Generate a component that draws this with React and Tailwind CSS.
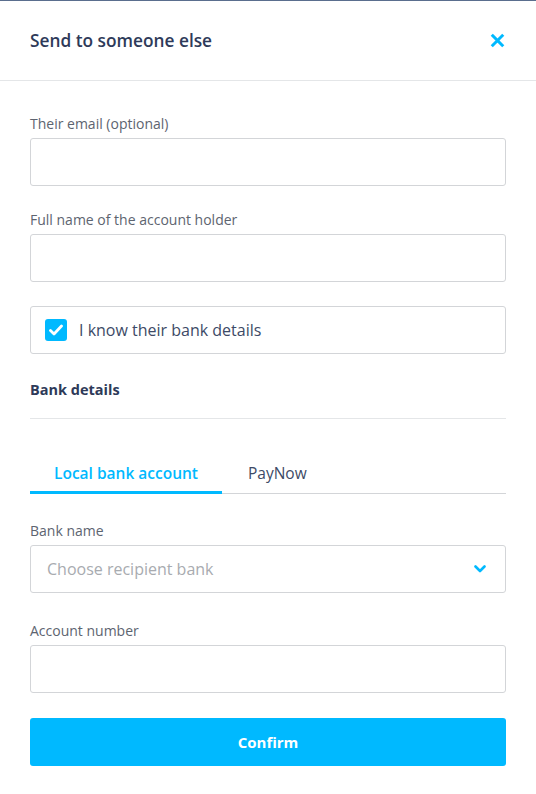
import React, { useState } from "react";

const font = { fontFamily: "'Open Sans', 'Noto Sans', sans-serif" };

function Field({ label, children }) {
  return (
    <div className="flex flex-col">
      <label className="text-[14px] leading-[20px] text-[#5d6470] mb-[4px]">{label}</label>
      {children}
    </div>
  );
}

export default function App() {
  const [tab, setTab] = useState("local");
  const [checked, setChecked] = useState(true);

  return (
    <div className="w-[536px] h-[794px] bg-white border-t border-[#5a6e8e]" style={font}>
      {/* Header */}
      <header className="h-[80px] flex items-center justify-between px-[30px] border-b border-[#e4e6e8]">
        <h1 className="text-[17.3px] font-semibold text-[#2e3a59]">Send to someone else</h1>
        <button className="text-[#00b9ff] mr-[1px]">
          <svg width="15" height="15" viewBox="0 0 16 16" fill="none">
            <path d="M3 3l10 10M13 3L3 13" stroke="currentColor" strokeWidth="3.2" strokeLinecap="square" />
          </svg>
        </button>
      </header>

      <div className="px-[30px] pt-[33px] flex flex-col">
        <Field label="Their email (optional)">
          <input className="h-[48px] border border-[#d3d5d8] rounded-[3px] px-4 outline-none" />
        </Field>

        <div className="mt-[24px]">
          <Field label="Full name of the account holder">
            <input className="h-[48px] border border-[#d3d5d8] rounded-[3px] px-4 outline-none" />
          </Field>
        </div>

        <button
          onClick={() => setChecked(!checked)}
          className="mt-[24px] h-[48px] border border-[#d3d5d8] rounded-[3px] flex items-center gap-[12px] px-[14px]"
        >
          <span
            className={`w-[22px] h-[22px] rounded-[3px] flex items-center justify-center ${checked ? "bg-[#00b9ff]" : "border border-[#c0c4c8]"}`}
          >
            {checked && (
              <svg width="14" height="12" viewBox="0 0 14 12" fill="none">
                <path d="M1.5 6.5l3.5 3.5 7.5-8" stroke="white" strokeWidth="2.8" strokeLinecap="round" strokeLinejoin="round" />
              </svg>
            )}
          </span>
          <span className="text-[16px] text-[#3d4a66]">I know their bank details</span>
        </button>

        <h2 className="mt-[26px] text-[14.5px] font-bold text-[#2e3a59] leading-[20px]">Bank details</h2>
        <div className="mt-[18px] border-t border-[#e4e6e8]" />

        {/* Tabs */}
        <div className="mt-[44px] flex border-b border-[#d3d5d8]">
          <button
            onClick={() => setTab("local")}
            className={`w-[192px] leading-[20px] pb-[8px] text-[15.5px] -mb-px border-b-[3px] ${tab === "local" ? "border-[#00b9ff] text-[#00b9ff] font-semibold" : "border-transparent text-[#3d4a66]"}`}
          >
            Local bank account
          </button>
          <button
            onClick={() => setTab("paynow")}
            className={`px-[26px] leading-[20px] pb-[8px] text-[15.5px] -mb-px border-b-[3px] ${tab === "paynow" ? "border-[#00b9ff] text-[#00b9ff] font-semibold" : "border-transparent text-[#3d4a66]"}`}
          >
            PayNow
          </button>
        </div>

        <div className="mt-[27px]">
          <Field label="Bank name">
            <button className="h-[48px] border border-[#d3d5d8] rounded-[3px] flex items-center justify-between pl-[16px] pr-[19px]">
              <span className="text-[16px] text-[#a8abb0]">Choose recipient bank</span>
              <svg width="12" height="8" viewBox="0 0 12 8" fill="none">
                <path d="M1.5 1.5L6 6l4.5-4.5" stroke="#00b9ff" strokeWidth="2.6" strokeLinecap="round" strokeLinejoin="round" />
              </svg>
            </button>
          </Field>
        </div>

        <div className="mt-[28px]">
          <Field label="Account number">
            <input className="h-[48px] border border-[#d3d5d8] rounded-[3px] px-4 outline-none" />
          </Field>
        </div>

        <button className="mt-[25px] h-[48px] rounded-[3px] bg-[#00b9ff] text-white text-[15px] font-bold">
          Confirm
        </button>
      </div>
    </div>
  );
}
